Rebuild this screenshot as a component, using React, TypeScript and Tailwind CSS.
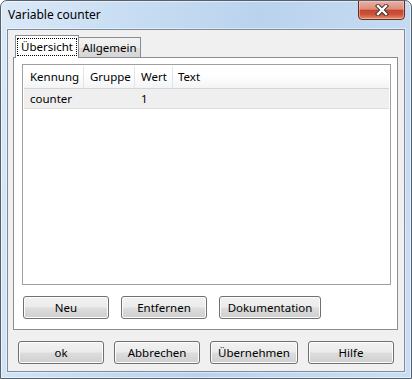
import React from "react";

function Btn({ className, children }: { className: string; children: React.ReactNode }) {
  return (
    <div
      className={`${className} h-[23px] rounded-[3px] border border-[#707070] bg-[linear-gradient(#f2f2f2_0%,#ebebeb_48%,#dddddd_52%,#cfcfcf_100%)] shadow-[inset_0_0_0_1px_#fcfcfc] flex items-center justify-center text-black`}
    >
      {children}
    </div>
  );
}

export default function App() {
  return (
    <div className="w-[412px] h-[379px] flex flex-col relative rounded-t-[7px] border border-[#56606c] bg-[linear-gradient(100deg,#dbe9f8_0%,#c6dcf2_30%,#bad3ed_55%,#c9def4_100%)] shadow-[inset_0_0_0_1px_rgba(255,255,255,0.55)] font-['Noto_Sans',sans-serif] text-[11.5px] leading-none overflow-hidden">
      {/* Title bar */}
      <div className="h-[28px] flex items-center pl-[7px] text-[12px] text-black">Variable counter</div>

      {/* Close button */}
      <div className="absolute top-[-1px] right-[6px] w-[47px] h-[20px] rounded-b-[4px] border border-[#6a2a22] bg-[linear-gradient(#eab0a2_0%,#dc8d7b_45%,#c4452d_52%,#cc533a_75%,#e3906f_100%)] shadow-[inset_0_0_0_1px_rgba(255,220,210,0.45)] flex items-center justify-center">
        <svg width="14" height="12" viewBox="0 0 14 12">
          <path d="M3 2 L11 10 M11 2 L3 10" stroke="#3a2a2a" strokeWidth="4.2" strokeLinecap="square" />
          <path d="M3 2 L11 10 M11 2 L3 10" stroke="#ffffff" strokeWidth="2.4" strokeLinecap="square" />
        </svg>
      </div>

      {/* Client area */}
      <div className="mx-[6px] mb-[6px] flex-1 border border-[#7f8b99] shadow-[0_0_0_1px_rgba(255,255,255,0.45)] bg-[#f0f0f0] flex flex-col">
        <div className="pt-[5px] pl-[5px] pr-[6px]">
          {/* Tabs */}
          <div className="flex items-end h-[23px] -mb-px relative z-10 pl-[2px]">
            <div className="w-[64px] h-[23px] border border-b-0 border-[#898c95] bg-white pt-[2px] px-[1px]">
              <div className="h-[18px] border border-dotted border-black flex items-center justify-center">Übersicht</div>
            </div>
            <div className="w-[62px] h-[21px] border border-l-0 border-[#898c95] bg-[linear-gradient(#f3f3f3_0%,#ebebeb_50%,#dddddd_52%,#d6d6d6_100%)] flex items-center justify-center pt-px">
              Allgemein
            </div>
          </div>

          {/* Panel */}
          <div className="h-[273px] border border-[#898c95] bg-white flex flex-col pl-[8px] pr-[6px] pt-[6px]">
            <div className="h-[221px] border border-[#a0a0a0] p-px">
              <div className="h-[23px] flex border-b border-[#d5d5d5] bg-[linear-gradient(#ffffff_0%,#ffffff_40%,#f3f4f6_100%)]">
                <div className="w-[60px] border-r border-[#e2e4e7] pl-[6px] flex items-center">Kennung</div>
                <div className="w-[51px] border-r border-[#e2e4e7] pl-[6px] flex items-center">Gruppe</div>
                <div className="w-[38px] border-r border-[#e2e4e7] pl-[6px] flex items-center">Wert</div>
                <div className="flex-1 pl-[5px] flex items-center">Text</div>
              </div>
              <div className="h-[20px] flex bg-[#efefef] border-b border-[#dedede]">
                <div className="w-[60px] pl-[6px] flex items-center">counter</div>
                <div className="w-[51px]" />
                <div className="w-[38px] pl-[6px] flex items-center">1</div>
              </div>
            </div>
            <div className="mt-[11px] ml-px flex gap-[12px]">
              <Btn className="w-[86px]">Neu</Btn>
              <Btn className="w-[86px]">Entfernen</Btn>
              <Btn className="w-[102px]">Dokumentation</Btn>
            </div>
          </div>
        </div>

        {/* Dialog buttons */}
        <div className="mt-[11px] pl-[10px] flex gap-[10px]">
          <Btn className="w-[86px]">ok</Btn>
          <Btn className="w-[86px]">Abbrechen</Btn>
          <Btn className="w-[88px]">Übernehmen</Btn>
          <Btn className="w-[86px]">Hilfe</Btn>
        </div>
      </div>
    </div>
  );
}
